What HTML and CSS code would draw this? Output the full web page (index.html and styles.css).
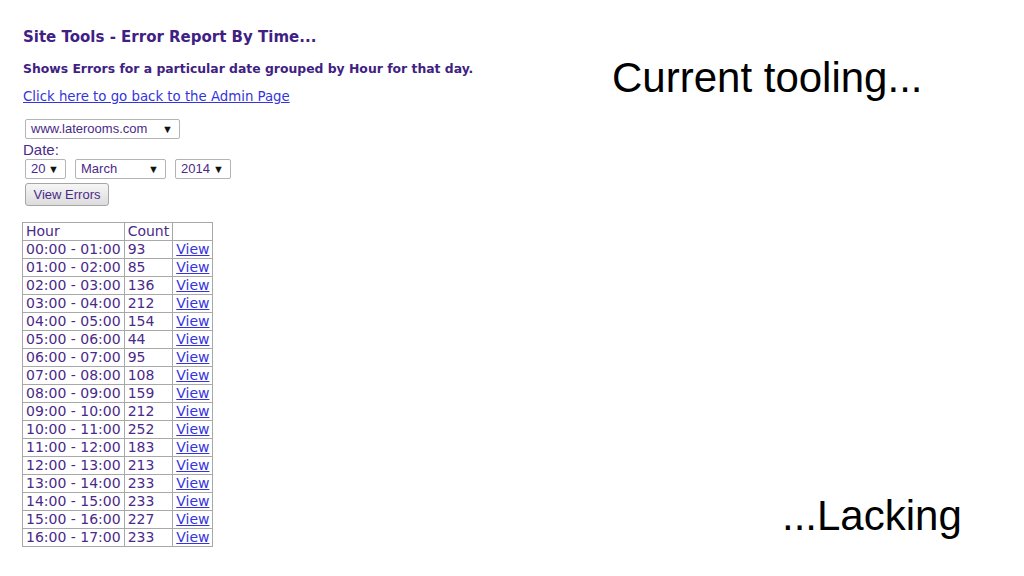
FILE: index.html
```html
<!DOCTYPE html>
<html lang="en">

<head>
  <meta charset="UTF-8">
  <title>Current tooling</title>
  <link rel="stylesheet" href="styles.css">
</head>

<body>
  <div class="slide">

    <div class="shot">
      <h1>Site Tools - Error Report By Time...</h1>
      <h2>Shows Errors for a particular date grouped by Hour for that day.</h2>
      <a class="back" href="#">Click here to go back to the Admin Page</a>

      <div class="site-row">
        <span class="sel sel-site">www.laterooms.com<i>▼</i></span>
      </div>
      <div class="label">Date:</div>
      <div class="date-row">
        <span class="sel sel-day">20<i>▼</i></span>
        <span class="sel sel-month">March<i>▼</i></span>
        <span class="sel sel-year">2014<i>▼</i></span>
      </div>
      <button class="view-btn">View Errors</button>

      <table class="report">
        <thead>
          <tr>
            <th class="c-hour">Hour</th>
            <th class="c-count">Count</th>
            <th class="c-link"></th>
          </tr>
        </thead>
        <tbody id="rows">
          <!-- rows are filled in below -->
        </tbody>
      </table>
    </div>

    <div class="side">
      <p class="big">Current tooling...</p>
      <p class="big">...Lacking</p>
    </div>

  </div>

  <script>
    const counts = [93, 85, 136, 212, 154, 44, 95, 108, 159, 212, 252, 183, 213, 233, 233, 227, 233];
    const rows = document.getElementById('rows');

    function pad(n) {
      return (n < 10 ? '0' : '') + n;
    }

    counts.forEach((count, hour) => {
      const row = rows.insertRow();
      row.innerHTML = `
        <td>${pad(hour)}:00 - ${pad(hour + 1)}:00</td>
        <td>${count}</td>
        <td><a href="#">View</a></td>
      `;
    });
  </script>
</body>

</html>
```

FILE: styles.css
```css
body {
  margin: 0;
  background: #fff;
}

.slide {
  display: flex;
  width: 1024px;
  height: 576px;
}

/* left side: the old admin page screenshot */
.shot {
  box-sizing: border-box;
  width: 560px;
  height: 552px;
  padding: 28px 0 0 23px;
  overflow: hidden;
  color: #4a2a88;
  font-family: "DejaVu Sans", Verdana, sans-serif;
}

.shot h1 {
  margin: 0;
  font-size: 15px;
  line-height: 18px;
  color: #3f2183;
}

.shot h2 {
  margin: 15px 0 0;
  font-size: 12.4px;
  line-height: 16px;
  color: #3f2183;
}

.back {
  display: inline-block;
  margin-top: 11px;
  font-size: 13.3px;
  line-height: 17px;
  color: #3434dc;
}

.site-row {
  margin-top: 13px;
}

.sel {
  box-sizing: border-box;
  display: inline-flex;
  justify-content: space-between;
  align-items: center;
  height: 20px;
  padding: 0 6px 0 5px;
  border: 1px solid #b4b4b4;
  border-radius: 2px;
  background: #fff;
  font-family: "Liberation Sans", Arial, sans-serif;
  font-size: 13px;
  color: #4a2a88;
  margin-left: 2px;
}

.sel i {
  font-style: normal;
  font-size: 11px;
  color: #111;
}

.sel-site {
  width: 155px;
}

.label {
  margin-top: 1px;
  font-family: "Liberation Sans", Arial, sans-serif;
  font-size: 15px;
  line-height: 19px;
}

.date-row {
  display: flex;
  gap: 7px;
}

.sel-day {
  width: 41px;
}

.sel-month {
  width: 91px;
}

.sel-year {
  width: 56px;
}

.view-btn {
  display: block;
  margin: 4px 0 0 2px;
  width: 84px;
  height: 23px;
  padding: 0;
  border: 1px solid #a6a6a6;
  border-radius: 3px;
  background: linear-gradient(#f6f6f6, #dcdcdc);
  font-family: "Liberation Sans", Arial, sans-serif;
  font-size: 13px;
  color: #4a2a88;
}

.report {
  margin-top: 16px;
  margin-left: -1px;
  border-collapse: collapse;
  font-size: 14px;
}

.report th,
.report td {
  border: 1px solid #a8a8a8;
  padding: 0 3px;
  line-height: 17px;
  text-align: left;
  font-weight: normal;
  white-space: nowrap;
}

.c-hour {
  width: 92px;
}

.c-count {
  width: 40px;
}

.c-link {
  width: 32px;
}

.report a {
  color: #3434dc;
}

/* right side: slide text */
.side {
  flex: 1;
  display: flex;
  flex-direction: column;
  justify-content: space-between;
  align-items: flex-start;
  padding: 54px 0 36px 52px;
}

.big {
  margin: 0;
  font-family: "Liberation Sans", Arial, sans-serif;
  font-size: 42px;
  line-height: 48px;
  color: #000;
}

.big + .big {
  margin-left: 170px;
}
```
